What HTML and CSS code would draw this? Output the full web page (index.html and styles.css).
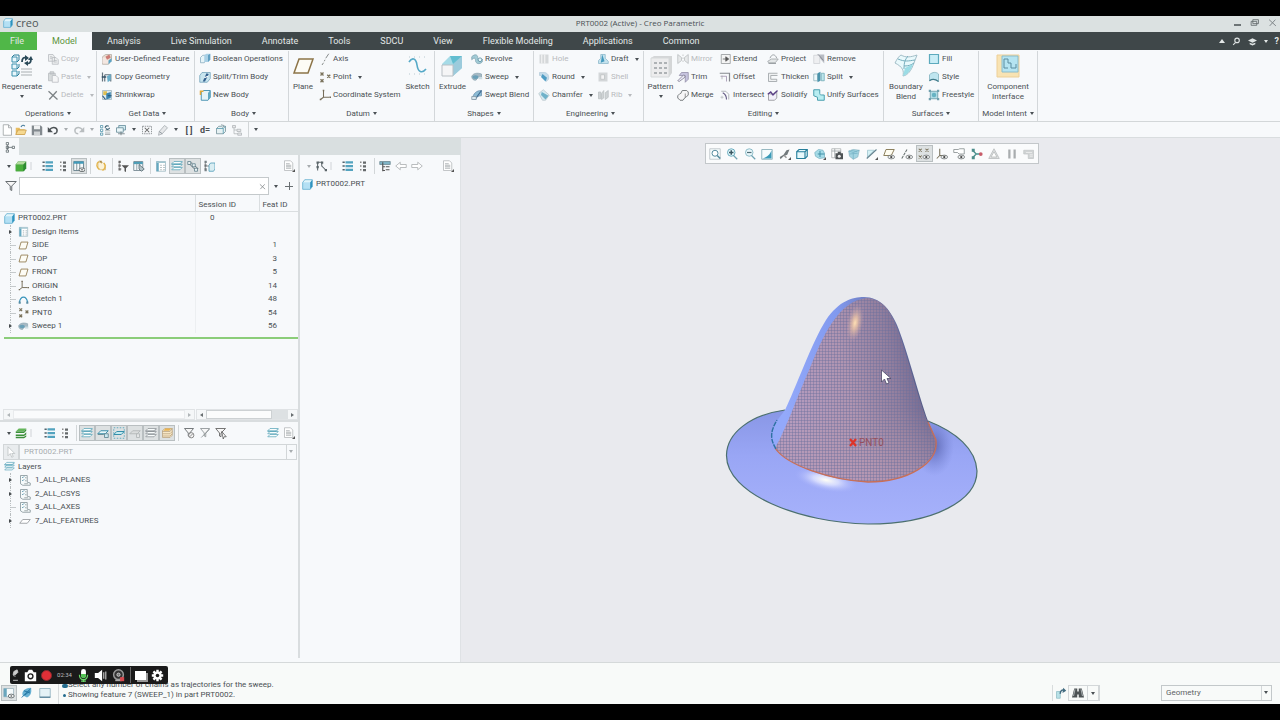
FILE: index.html
```html
<!DOCTYPE html>
<html lang="en">
<head>
<meta charset="utf-8">
<title>PRT0002 (Active) - Creo Parametric</title>
<link rel="stylesheet" href="styles.css">
</head>
<body>
<svg class="sprite" aria-hidden="true">
  <symbol id="cube" viewBox="0 0 16 16"><path d="M1 5 4 1h11v10l-3 4H1z" fill="#8ccbea"/><path d="M1 5h11v10H1z" fill="#b4e0f4"/><path d="M1 5 4 1h11l-3 4z" fill="#e2f5fb"/><path d="m12 5 3-4v10l-3 4z" fill="#2b91bd"/><path d="M1 5v10h11l3-4V1H4z" fill="none" stroke="#5aa9cb"/></symbol>
  <symbol id="gcube" viewBox="0 0 16 16"><path d="M1 6 4 2h11v9l-3 4H1z" fill="#2d8b31"/><path d="M1 6h10v9H1z" fill="#4aae3c"/><path d="m1 6 3-4h11l-4 4z" fill="#b4dc9f"/></symbol>
  <symbol id="regen" viewBox="0 0 24 24"><g fill="#e8f7fc" stroke="#3d91ad"><path d="M2 3h5v5H2zM2 10h5v5H2zM2 17h5v5H2z"/></g><path d="m2 3 2-2h5v5L7 8M7 15l2-2v-3M7 22l2-2v-3" fill="none" stroke="#2b7e9b"/><path d="M12 8c0-4 2-5 4-4M21 5c0 4-2 5-4 4" fill="none" stroke="#294958" stroke-width="1.800"/><path d="m15 1 4 3-4 3zM18 6l3-4 2 4zM18 7v5l-4-3z" fill="#294958"/><path d="M11 15h11M11 18h11M11 21h11" stroke="#a9afb2"/></symbol>
  <symbol id="copy" viewBox="0 0 16 16"><path d="M2 2h6l2 3v6H2zM7 6h5l3 3v6H7z" fill="#eceeef" stroke="#b5babd"/><path d="M4 5h3M4 7h3M9 10h4M9 12h4" stroke="#b5babd"/></symbol>
  <symbol id="paste" viewBox="0 0 16 16"><path d="M2 3h9v10H2zM4 1h5v3H4z" fill="#d7dbdc" stroke="#b5babd"/><path d="M7 6h5l3 3v6H7z" fill="#f5f6f7" stroke="#b5babd"/></symbol>
  <symbol id="cross" viewBox="0 0 16 16"><path d="m2 3 12 11M13 3 3 14" fill="none" stroke="#7d8386" stroke-width="1.7"/></symbol>
  <symbol id="udf" viewBox="0 0 16 16"><path d="M2 5 6 2h8v8l-4 5H2z" fill="#e7dcd0" stroke="#b0aaa2"/><path d="M2 6h8v8H2z" fill="#f4e7e1"/><path d="m6 5 5-3 2 4-5 3z" fill="#cc7b75"/><path d="m10 10 4-3v4l-4 4z" fill="#5aa4c6"/></symbol>
  <symbol id="copygeo" viewBox="0 0 16 16"><path d="M2 2v12M5 5v9M5 5h8v9" fill="none" stroke="#63727c" stroke-width="1.6"/><path d="m8 7 5-3v8l-4 3z" fill="#69aeca"/><path d="M1 8h6" stroke="#345267" stroke-width="2"/></symbol>
  <symbol id="shrink" viewBox="0 0 16 16"><path d="M2 2h12v12H2z" fill="#dce9ec" stroke="#9cb3be"/><path d="M3 3h5v5H3z" fill="#dfbf52"/><path d="m7 6 6-2v8l-6 2z" fill="#3b85b0"/><path d="m2 9 4 5M9 9h5" stroke="#245174" stroke-width="1.5"/></symbol>
  <symbol id="bool" viewBox="0 0 16 16"><path d="M2 6 5 3h5v6l-3 4H2z" fill="#e6f4f8" stroke="#87a9bd"/><path d="m7 3 3-2h5v8l-3 3H7z" fill="#a9d0e5"/><path d="m12 3 3-2v8l-3 3z" fill="#5f9fc1"/></symbol>
  <symbol id="splitbody" viewBox="0 0 16 16"><path d="M1 6 4 2h11v8l-4 5H1z" fill="#c8e5ef" stroke="#6fa0b8"/><path d="m5 14 5-11 3 1-5 10z" fill="#315e8d"/><path d="m7 9 5-2" stroke="#fff" stroke-width="1.5"/></symbol>
  <symbol id="newbody" viewBox="0 0 16 16"><path d="M3 5 6 2h9v9l-3 4H3z" fill="#e5f3f7" stroke="#4a94b2" stroke-width="1.3"/><path d="m12 5 3-3v9l-3 4z" fill="#5fa7c1"/><path d="M1 2h5v2H3v4H1z" fill="#e1a937"/></symbol>
  <symbol id="plane" viewBox="0 0 16 16"><path d="M4.500 3h10l-3 10h-10z" fill="#fdfcf5" stroke="#8c7448" stroke-width="1.200"/></symbol>
  <symbol id="bigplane" viewBox="0 0 24 24"><path d="M8 5h14l-5 14H3z" fill="#fdfcf5" stroke="#8c7448" stroke-width="1.500"/></symbol>
  <symbol id="axis" viewBox="0 0 16 16"><path d="M13 1 9 7M8 9l-1 2M6 13l-2 3" stroke="#7b7f7e" stroke-width="1.2"/></symbol>
  <symbol id="points" viewBox="0 0 16 16"><path d="m2 2 4 4m0-4L2 6M2 11l4 4m0-4-4 4M11 5l4 4m0-4-4 4" stroke="#79715a" stroke-width="1.800"/></symbol>
  <symbol id="csys" viewBox="0 0 16 16"><path d="M6 2v9h8M6 11l-4 3" fill="none" stroke="#766d5a" stroke-width="1.400"/><path d="M5 1h2v2H5zM1 13h2v2H1zM14 10h2v2h-2z" fill="#766d5a"/></symbol>
  <symbol id="sketch" viewBox="0 0 24 24"><path d="M3 8c3-5 7-4 8 3s5 9 9 4" fill="none" stroke="#55a9c7" stroke-width="1.600"/><path d="M3 3h18M3 20h18" stroke="#b8c9d0" stroke-dasharray="1 4"/></symbol>
  <symbol id="arc" viewBox="0 0 16 16"><path d="M2 12C4 2 12 2 14 12" fill="none" stroke="#3793bb" stroke-width="1.800"/><path d="M1 11h3v3H1zM12 11h3v3h-3z" fill="#5a8ca3"/></symbol>
  <symbol id="extrude" viewBox="0 0 24 24"><path d="M2 10 10 2h12v12l-9 8H2z" fill="#a6dbe7"/><path d="m13 10 9-8v12l-9 8z" fill="#9ccbdc"/><path d="m10 2 12 0-9 8z" fill="#62bdd0"/><path d="M2 11h11v11H2z" fill="#f5f5f6" stroke="#b9bfc4"/></symbol>
  <symbol id="revolve" viewBox="0 0 16 16"><path d="M1 5c4-4 8-3 8 1s4 6 6 2v4c-4 4-9 2-9-2s-2-4-5-1z" fill="#a2cbd6" stroke="#7fa3b0"/><circle cx="12" cy="9" r="2.500" fill="#e9f8fb" stroke="#4d8699"/></symbol>
  <symbol id="sweep" viewBox="0 0 16 16"><path d="M1 7c2-4 7-5 13-3v5c-4-1-6 0-7 3-3 1-6-1-6-5z" fill="#a6b9c4" stroke="#8aa3af"/><ellipse cx="6" cy="8" rx="4" ry="2.500" fill="#6aa0b8"/><path d="M10 8h5v3h-5z" fill="#cbdce2"/></symbol>
  <symbol id="sblend" viewBox="0 0 16 16"><path d="M2 13C3 6 7 2 14 2v7c-5 0-7 2-8 5z" fill="#8bbbd4" stroke="#6a8eab"/><path d="m6 13 8-11" stroke="#3e6a91" stroke-width="1.600"/><path d="M1 10h6v4H1z" fill="#dbe8ef" stroke="#7f94a2"/></symbol>
  <symbol id="hole" viewBox="0 0 16 16"><path d="M2 2h12v12H2z" fill="#d5d8da"/><path d="M5 2v12M9 2v12" stroke="#f4f4f5" stroke-width="1.5"/></symbol>
  <symbol id="round" viewBox="0 0 16 16"><path d="M2 2h7c4 1 6 4 5 9l-3 3-1-5c-1-3-4-3-8-3z" fill="#c5dcea" stroke="#b4cbda"/><path d="m6 4 6 5-2 5-6-6z" fill="#4f9dc4"/></symbol>
  <symbol id="chamfer" viewBox="0 0 16 16"><path d="m1 6 6-5 8 7-5 7H6z" fill="#d7eaf0" stroke="#b8c5cb"/><path d="m5 4 9 5-4 5-6-6z" fill="#70b2c9"/></symbol>
  <symbol id="draft" viewBox="0 0 16 16"><path d="M5 2h6v5l4 4v3H2v-4l3-3z" fill="#c5e2ed" stroke="#8ab5c9"/><path d="m7 2 3 9-5 2z" fill="#4499bd"/></symbol>
  <symbol id="shell" viewBox="0 0 16 16"><path d="M2 2h12v12H2z" fill="#d3d6d8"/><path d="M5 5h5v6H5z" fill="#f4f4f5" stroke="#bbc0c2"/></symbol>
  <symbol id="rib" viewBox="0 0 16 16"><path d="M2 4h3v9H2zM6 6l3-4v10l-3 2zM11 5l4-3v9l-4 3z" fill="#cfd3d5" stroke="#babfc2"/></symbol>
  <symbol id="pattern" viewBox="0 0 24 24"><path d="m2 4 3-2h18v17l-3 4H2z" fill="#d4d6d7"/><path d="M2 4h18v19H2z" fill="#ececed" stroke="#d6d9da"/><path d="M5 9h3M10 9h3M15 9h3M5 14h3M10 14h3M15 14h3M5 19h3M10 19h3M15 19h3" stroke="#aeb2b5" stroke-width="2"/></symbol>
  <symbol id="mirror" viewBox="0 0 16 16"><path d="m1 2 5 4v4l-5 4zM15 2l-5 4v4l5 4z" fill="#e7e9ea" stroke="#b5b9bb"/><path d="M8 2v12" stroke="#b5b9bb" stroke-dasharray="2"/></symbol>
  <symbol id="trim" viewBox="0 0 16 16"><path d="M6 2h9v9l-4 4V6H3z" fill="#c7c4df" stroke="#8f8aa4"/><path d="m1 13 8-8 2 3-8 6z" fill="#eceaf7" stroke="#79778b"/></symbol>
  <symbol id="merge" viewBox="0 0 16 16"><path d="M7 2h6l2 2v4l-3 3h-1l-3 4H4l-3-3V9l3-3h1z" fill="#f6f6f7" stroke="#777c7e" stroke-width="1.300"/><path d="M11 11V6" stroke="#777"/></symbol>
  <symbol id="extend" viewBox="0 0 16 16"><path d="M3 2h12v12H3V2" fill="#f4f4f4" stroke="#8d9294"/><path d="M5 8h4V5l4 3-4 3V8" fill="#555" stroke="#555"/></symbol>
  <symbol id="offset" viewBox="0 0 16 16"><path d="M1 3h13v11" fill="none" stroke="#85898e" stroke-width="1.600"/><path d="M2 7h8v7" fill="none" stroke="#9687a5"/><path d="M4 6v5" stroke="#a7a7ac"/></symbol>
  <symbol id="inter" viewBox="0 0 16 16"><path d="M3 3h6l4 4v7" fill="none" stroke="#9da2a6"/><path d="M5 5c4 2 5 4 5 9" fill="none" stroke="#655c85" stroke-width="1.5"/><path d="M2 11h4M4 9v4" stroke="#b5bbbd"/></symbol>
  <symbol id="project" viewBox="0 0 16 16"><path d="m1 11 5-3h9l-4 5H2z" fill="#e4e7e8" stroke="#999fa1"/><path d="M4 7c2-6 7-6 9 0M2 14h10" fill="none" stroke="#83898d"/></symbol>
  <symbol id="thicken" viewBox="0 0 16 16"><path d="M14 3H2v11h11v-3H5V6h9" fill="#eff1f2" stroke="#949a9d"/></symbol>
  <symbol id="solid" viewBox="0 0 16 16"><path d="m2 6 5 1 6-4v9l-3 3H2z" fill="#f2f0fa" stroke="#88898e"/><path d="m1 7 4-3 3 4 6-6" fill="none" stroke="#5b3f88" stroke-width="1.700"/></symbol>
  <symbol id="remove" viewBox="0 0 16 16"><path d="M5 2h10v12z" fill="#b8bcc3"/><path d="M1 3h8v11H1z" fill="#eeeff1" stroke="#cdd0d4"/><path d="m7 2 7 8" stroke="#767781"/></symbol>
  <symbol id="split" viewBox="0 0 16 16"><path d="M1 4h5v9H1z" fill="#eef9fb" stroke="#8cb0ba"/><path d="m6 3 4-2v12l-4 2z" fill="#4b94ac"/><path d="M11 3h4v10h-4z" fill="#bce5eb" stroke="#6ea8b3"/></symbol>
  <symbol id="unify" viewBox="0 0 16 16"><path d="M1 1h8v5c0 2 1 2 6 2v7H6v-4L1 9z" fill="#b8edf1" stroke="#469dad" stroke-width="1.3"/></symbol>
  <symbol id="boundary" viewBox="0 0 24 24"><path d="M1 9C3 5 5 2 7 1c5 3 10 2 16 0l-3 8c-3 8-6 12-11 13 1-5 0-9-8-13z" fill="#e9f9fc" stroke="#a3bec8"/><path d="M4 5c7 3 10 2 17 1M10 12c5 0 7-1 10-3M14 2c-3 4-4 6-4 13" fill="none" stroke="#74adbc"/><path d="m11 14 8-4c-2 6-5 10-10 12z" fill="#9bdce5"/></symbol>
  <symbol id="fill" viewBox="0 0 16 16"><path d="M2 2h12v12H2z" fill="#c9edf6" stroke="#5caabd" stroke-width="1.600"/></symbol>
  <symbol id="style" viewBox="0 0 16 16"><path d="M2 13V5c4-4 9-4 12-1v10c-4-3-8-4-12-1z" fill="#bfe5ef" stroke="#7badba"/><path d="M2 13c4-3 8-2 12 1" fill="none" stroke="#437c8b" stroke-width="1.5"/></symbol>
  <symbol id="free" viewBox="0 0 16 16"><path d="M3 3h10v10H3z" fill="#b0dce5" stroke="#6293a0"/><path d="M1 1h3v3H1zM12 1h3v3h-3zM1 12h3v3H1zM12 12h3v3h-3z" fill="#6fa0ae"/><circle cx="8" cy="8" r="3" fill="#67b3c3"/></symbol>
  <symbol id="compif" viewBox="0 0 24 24"><path d="M1 1h22v22H1z" fill="#f8e3b3" stroke="#edcf97"/><path d="M6 2h16v16H6z" fill="#b5e4f1" stroke="#8bbccb"/><path d="M8 5h4v4h3v5h5v-4M8 5v9h4" fill="none" stroke="#5a8c9f"/></symbol>
  <symbol id="page" viewBox="0 0 16 16"><path d="M3 1h7l4 4v10H3z" fill="#fff" stroke="#969b9e"/><path d="M10 1v4h4" fill="none" stroke="#969b9e"/></symbol>
  <symbol id="report" viewBox="0 0 16 16"><path d="M2 1h8l3 3v10H2z" fill="#fff" stroke="#b0b4b6"/><path d="M4 5h5M4 7h7M4 9h7M4 11h7" stroke="#9ba1a4"/><path d="M12 16h4v-4z" fill="#555"/></symbol>
  <symbol id="open" viewBox="0 0 16 16"><path d="M1 5h5l1 2h6v7H1z" fill="#e8bd62"/><path d="m1 14 3-6h11l-2 6z" fill="#f6d991" stroke="#c89b4a"/><path d="M8 4c1-3 4-3 5-1" fill="none" stroke="#467b9b" stroke-width="1.500"/></symbol>
  <symbol id="save" viewBox="0 0 16 16"><path d="M1 2h12l2 2v11H1z" fill="#838a8f"/><path d="M4 2h8v5H4z" fill="#eff1f2"/><path d="M4 10h8v5H4z" fill="#d0d4d6"/></symbol>
  <symbol id="undo" viewBox="0 0 16 16"><path d="M3 8c5-6 12-3 10 3-1 2-3 2-4 2" fill="none" stroke="currentColor" stroke-width="2"/><path d="M1 4v7h7z" fill="currentColor"/></symbol>
  <symbol id="regs" viewBox="0 0 16 16"><path d="M2 2h3v3H2zM2 7h3v3H2zM2 12h3v3H2z" fill="#fff" stroke="#4a8fa7"/><path d="M8 5c1-3 3-3 5-2M14 5c0 2-3 3-5 1" fill="none" stroke="#3b6173" stroke-width="1.500"/><path d="M8 9h7M8 12h7M8 14h7" stroke="#92999c"/></symbol>
  <symbol id="windows" viewBox="0 0 16 16"><path d="M5 2h9v6H5z" fill="#d3ebf1" stroke="#598494"/><path d="M2 5h9v6H2z" fill="#eaf7f9" stroke="#5b8390"/><path d="M4 13h9M8 10v5" stroke="#67747a"/></symbol>
  <symbol id="closewin" viewBox="0 0 16 16"><path d="M2 3h12v10H2z" fill="none" stroke="#777d80" stroke-dasharray="2 1"/><path d="m5 5 6 6m0-6-6 6" stroke="#666" stroke-width="1.400"/></symbol>
  <symbol id="brush" viewBox="0 0 16 16"><path d="m10 2 4 3-7 8-5 2 1-5z" fill="#e6e8ea" stroke="#a0a7ab"/><path d="m3 10 4 3" stroke="#77818a"/></symbol>
  <symbol id="views" viewBox="0 0 16 16"><path d="M5 3h9v7l-3 3H2V6z" fill="#e6f1f3" stroke="#6e8b94"/><path d="M2 6h9v7M11 6l3-3" fill="none" stroke="#4c94aa"/><path d="m8 1 4 1-2 3" fill="#d3e7eb" stroke="#829298"/></symbol>
  <symbol id="treegray" viewBox="0 0 16 16"><path d="M2 2h4v3H2zM8 7h5v3H8zM9 12h5v3H9z" fill="#e7e8ea" stroke="#afb4b7"/><path d="M4 5v8h5M4 8h4" fill="none" stroke="#afb4b7"/></symbol>
  <symbol id="tree" viewBox="0 0 16 16"><path d="M3 2h3v3H3zM3 7h3v3H3zM3 12h3v3H3zM11 7h3v3h-3z" fill="#f4f7f7" stroke="#5b6569"/><path d="M4.500 5v7M6 8.500h5" stroke="#5b6569"/></symbol>
  <symbol id="dots" viewBox="0 0 16 16"><path d="M8 1v15" stroke="#a9afb2" stroke-width="2" stroke-dasharray="2 2"/></symbol>
  <symbol id="expand" viewBox="0 0 16 16"><path d="M6 3h10M6 8h10M6 13h10" stroke="#53a3bf" stroke-width="3"/><path d="M2 3h3M2 8h3M2 13h3" fill="none" stroke="#51636d" stroke-width="2"/></symbol>
  <symbol id="collapse" viewBox="0 0 16 16"><path d="M8 2h4v3H8zM8 7h4v3H8zM8 12h4v3H8z" fill="#65696b"/><path d="M4 3h2M4 8h2M4 13h2" stroke="#888" stroke-width="2"/></symbol>
  <symbol id="columns" viewBox="0 0 16 16"><path d="M1 2h13v12H1z" fill="#f6fafb" stroke="#526f7c"/><path d="M1 3.500h13" stroke="#409cbc" stroke-width="3"/><path d="M5 4v10M9 4v10" stroke="#5d7480"/><ellipse cx="12" cy="13" rx="4" ry="2.500" fill="#eef1f1" stroke="#4b5254"/><circle cx="12" cy="13" r="1" fill="#444"/></symbol>
  <symbol id="navicon" viewBox="0 0 16 16"><path d="M1 2h13v11H1z" fill="#f6fafb" stroke="#9bb2bb"/><path d="M1 2h4v11H1z" fill="#6aa6bd"/><ellipse cx="11" cy="12" rx="4" ry="2.500" fill="#eef1f1" stroke="#4b5254"/><circle cx="11" cy="12" r="1" fill="#444"/></symbol>
  <symbol id="pref" viewBox="0 0 16 16"><path d="M4 3h6l4 4v6H7l-3-3z" fill="#fbf2d8" stroke="#d4b778"/><path d="M5 2c-4 3-3 8 1 11M12 4c3 4 1 8-2 10" fill="none" stroke="#e4b447" stroke-width="1.800"/><path d="M5 1h4v4z" fill="#a88742"/></symbol>
  <symbol id="tfilter" viewBox="0 0 16 16"><path d="M2 1h3v3H2zM2 6h3v3H2zM2 11h3v3H2z" fill="#666"/><path d="M3 3v9h3" fill="none" stroke="#777"/><path d="M6 7h10l-4 4v5l-2-1v-4z" fill="#555"/></symbol>
  <symbol id="detail" viewBox="0 0 16 16"><path d="M2 2h3v3H2zM2 8h3v3H2zM8 2h3v3H8zM13 12h3v3h-3z" fill="#5b6569"/><path d="M3.500 4v10M4 3h5M9 4v4l5 5" fill="none" stroke="#5b6569" stroke-width="1.400"/></symbol>
  <symbol id="colfind" viewBox="0 0 16 16"><path d="M1 2h12v12H1z" fill="#f4f8fa" stroke="#617681"/><path d="M1 4h12" stroke="#4b9fb9" stroke-width="3"/><path d="M5 4v10M9 4v10" stroke="#7c9098"/><path d="m8 6 7 6-4 3-3-3z" fill="#b5c5ca" stroke="#54666e"/></symbol>
  <symbol id="design" viewBox="0 0 16 16"><path d="M2 2h12v13H2z" fill="#fff" stroke="#9ab6bf"/><path d="M2 2h3v13H2z" fill="#64a8c0"/><path d="M2 3h12" stroke="#a2c6d0" stroke-width="2"/><path d="M7 7h2M11 7h2M7 10h2M11 10h2M7 13h2M11 13h2" stroke="#88989d"/></symbol>
  <symbol id="layers" viewBox="0 0 16 16"><path d="m1 5 3-3h11l-3 3zM1 9l3-3h11l-3 3zM1 13l3-3h11l-3 3z" fill="#f9fdfd" stroke="currentColor"/><path d="M1 5v1h11l3-3" fill="none" stroke="currentColor"/></symbol>
  <symbol id="glayers" viewBox="0 0 16 16"><path d="m1 6 4-4h10l-3 4z" fill="#64b65a"/><path d="M1 6h11l3-4v3l-3 3H1zM1 10h11l3-3v3l-3 2H1zM1 13h11l3-2v2l-3 2H1z" fill="#3c8f3a"/></symbol>
  <symbol id="chain" viewBox="0 0 16 16"><path d="M1 2h4v4H1zM7 5h4v4H7zM10 11h4v4h-4z" fill="#eaf2f4" stroke="#587986"/><path d="M5 4h2M11 8l4 4M4 6l6 6" stroke="#5e6f78" stroke-width="1.200"/></symbol>
  <symbol id="treecube" viewBox="0 0 16 16"><path d="M2 1h3v3H2zM2 6h3v3H2zM2 11h3v4H2z" fill="#768085"/><path d="M3 4v9M5 8h3" stroke="#666"/><path d="m8 7 2-3h6v8l-2 3H8z" fill="#d9edf2" stroke="#4595b3"/></symbol>
  <symbol id="funnel" viewBox="0 0 16 16"><path d="M1 2h14L9 8v6l-2-1V8z" fill="#f7f7f7" stroke="#62686b" stroke-width="1.300"/></symbol>
  <symbol id="funnelx" viewBox="0 0 16 16"><path d="M2 2h12L9 8v5l-2-1V8zM3 14 14 3" fill="#f7f7f7" stroke="#7f8588"/></symbol>
  <symbol id="funnelo" viewBox="0 0 16 16"><path d="M2 2h12L9 8v5l-2-1V8z" fill="#f7f7f7" stroke="#666c6f" stroke-width="1.200"/><circle cx="11" cy="11" r="3.500" fill="#f7f7f7" stroke="#666"/><path d="m9 13 4-4" stroke="#666"/></symbol>
  <symbol id="funnelp" viewBox="0 0 16 16"><path d="M1 2h13L8 8v5L6 12V8z" fill="#f7f7f7" stroke="#666" stroke-width="1.200"/><path d="m9 6 6 7-3 0-1 3z" fill="#fff" stroke="#555"/></symbol>
  <symbol id="left" viewBox="0 0 16 16"><path d="m1 8 6-5v3h8v4H7v3z" fill="#fff" stroke="#a4a8aa"/></symbol>
  <symbol id="right" viewBox="0 0 16 16"><path d="M15 8 9 3v3H1v4h8v3z" fill="#fff" stroke="#a4a8aa"/></symbol>
  <symbol id="treelist" viewBox="0 0 16 16"><path d="M1 2h14v4H1z" fill="#7fb4c6" stroke="#69858f"/><path d="M5 3v12M5 9h3M5 14h3M9 9h5M9 13h5" stroke="#555" stroke-width="1.500"/></symbol>
  <symbol id="layer1" viewBox="0 0 16 16"><path d="m1 9 4-4h10l-4 4z" fill="#e9f7fa" stroke="#398eaa" stroke-width="1.300"/><path d="M10 9h5v5h-5zM1 10h8" fill="#ccebf2" stroke="#537985"/></symbol>
  <symbol id="layer2" viewBox="0 0 16 16"><path d="M1 1h14v14H1z" fill="none" stroke="#399ab7" stroke-dasharray="2"/><path d="m1 10 4-4h10l-4 4z" fill="#c5ebf1" stroke="#328da9" stroke-width="1.300"/></symbol>
  <symbol id="layer3" viewBox="0 0 16 16"><path d="m1 9 4-4h10l-4 4z" fill="#dadddd" stroke="#abb0b1"/><path d="M10 9h4v5h-4z" fill="#e3e5e5" stroke="#abb0b1"/></symbol>
  <symbol id="layer4" viewBox="0 0 16 16"><path d="M2 5 5 2h10l-3 4H2zM2 5v9h10l3-3V2M2 9h10l3-3M2 12h10l3-3" fill="#f8e8c7" stroke="#b8a27d"/><path d="m3 5 3-3h8l-3 3z" fill="#ebb451"/></symbol>
  <symbol id="layeritem" viewBox="0 0 16 16"><path d="M2 2h9v9l4 1v3H5l-3-2z" fill="#f6fafb" stroke="#7c8c92"/><path d="m4 4 1 1 2-2M4 8l1 1 2-2" fill="none" stroke="#397f9a"/><path d="M8 5h2M8 9h2M7 13h5" stroke="#899496"/></symbol>
  <symbol id="sheet" viewBox="0 0 16 16"><path d="m1 11 4-5h10l-4 5z" fill="#fff" stroke="#8a8e90"/></symbol>
  <symbol id="pointer" viewBox="0 0 16 16"><path d="M4 1v12l3-3 2 5 2-1-2-4h4z" fill="#fff" stroke="currentColor"/></symbol>
  <symbol id="zfit" viewBox="0 0 16 16"><path d="M1 1h14v14H1z" fill="#f5fbfc" stroke="#b5bec1"/><circle cx="8" cy="7" r="4" fill="#fff" stroke="#52899b" stroke-width="1.300"/><path d="m11 10 4 4" stroke="#52899b" stroke-width="2"/></symbol>
  <symbol id="zin" viewBox="0 0 16 16"><circle cx="7" cy="6" r="5" fill="#e0f6fa" stroke="#4695ac"/><path d="m10 10 5 5" stroke="#6fa3b3" stroke-width="1.600"/><path d="M4 6h6M7 3v6" stroke="#3a5661" stroke-width="2"/></symbol>
  <symbol id="zout" viewBox="0 0 16 16"><circle cx="7" cy="6" r="5" fill="#e9f7fa" stroke="#6fa9ba"/><path d="m10 10 5 5" stroke="#6fa3b3" stroke-width="1.600"/><path d="M4 6h6" stroke="#4f6c76" stroke-width="1.600"/></symbol>
  <symbol id="repaint" viewBox="0 0 16 16"><path d="M1 2h14v13H1z" fill="#f7fcfd" stroke="#78a3af"/><path d="M2 14C8 12 12 9 14 3v11z" fill="#3a9ab8"/></symbol>
  <symbol id="render" viewBox="0 0 16 16"><path d="m1 12 5-3 4-6 4-1-3 7-5 2-4 4z" fill="#737a7d"/><path d="m7 10 3 3" stroke="#999" stroke-width="2"/><path d="M12 16h4v-4z" fill="#555"/></symbol>
  <symbol id="box" viewBox="0 0 16 16"><path d="M1 5 4 2h11v9l-3 3H1z" fill="#e7f9fc" stroke="#287f9b" stroke-width="1.500"/><path d="M1 5h11v9M12 5l3-3" fill="none" stroke="#247e9c" stroke-width="1.500"/></symbol>
  <symbol id="saved" viewBox="0 0 16 16"><path d="m1 6 5-4 6 1 2 4v6l-7 1-5-3z" fill="#a5dbe7" stroke="#7ab1c1"/><path d="M5 8h9M8 4v8" stroke="#4190a6" stroke-width="1.300"/><path d="M12 16h4v-4z" fill="#555"/></symbol>
  <symbol id="camera" viewBox="0 0 16 16"><path d="M1 1h12v12H1z" fill="#fff" stroke="#a5aaac"/><path d="M1 4h12M5 1v12" stroke="#92999c"/><path d="M6 7h10v8H6zM9 5h4v2H9z" fill="#4e5355"/><circle cx="11" cy="11" r="2" fill="#eee"/></symbol>
  <symbol id="persp" viewBox="0 0 16 16"><path d="m1 4 6-2 8 1-2 9-6 3-5-4z" fill="#a4d5e2" stroke="#8db7c4"/><path d="m1 4 6 2 8-3M7 6v9M4 3l8 2M2 8l11-1" stroke="#76b3c5" fill="none"/></symbol>
  <symbol id="section" viewBox="0 0 16 16"><path d="M2 3h9L2 12z" fill="#d5f1f5" stroke="#9bc3cd"/><path d="m1 14 13-12" stroke="#63828f" stroke-width="1.500"/><path d="M12 16h4v-4z" fill="#555"/></symbol>
  <symbol id="eye" viewBox="0 0 16 16"><ellipse cx="11" cy="12" rx="4.500" ry="2.500" fill="#eef0f0" stroke="#6a6f71"/><circle cx="11" cy="12" r="1.500" fill="#444"/></symbol>
  <symbol id="planeeye" viewBox="0 0 16 16"><path d="M4 2h11l-4 8H1z" fill="#fffdf1" stroke="#8a7d59" stroke-width="1.300"/><use href="#eye"/></symbol>
  <symbol id="axiseye" viewBox="0 0 16 16"><path d="m1 14 7-12" stroke="#66706f" stroke-width="1.400" stroke-dasharray="4 1"/><use href="#eye"/></symbol>
  <symbol id="pointeye" viewBox="0 0 16 16"><path d="m1 1 4 4m0-4L1 5M10 1l4 4m0-4-4 4M1 10l4 4m0-4-4 4" stroke="#777059" stroke-width="1.400"/><use href="#eye"/></symbol>
  <symbol id="csyseye" viewBox="0 0 16 16"><path d="M5 1v9h8M5 10l-4 4" fill="none" stroke="#777059" stroke-width="1.400"/><use href="#eye"/></symbol>
  <symbol id="anno" viewBox="0 0 16 16"><path d="M1 2h6l2-1h6v7H8L6 6H1z" fill="#fff" stroke="#7d8587"/><use href="#eye"/></symbol>
  <symbol id="drag" viewBox="0 0 16 16"><path d="m2 3 5 5-5 5M7 8h6" fill="none" stroke="#4a918e" stroke-width="1.800"/><path d="M1 1h4v4H1zM1 11h4v4H1z" fill="#4d8d8b"/><circle cx="13" cy="8" r="2.500" fill="#c85b69"/></symbol>
  <symbol id="tri" viewBox="0 0 16 16"><path d="m8 1 7 13H1z" fill="#e0e2e3" stroke="#b4b8ba"/><path d="m8 5 4 7H4z" fill="#fff" stroke="#b2b5b6"/></symbol>
  <symbol id="pause" viewBox="0 0 16 16"><path d="M3 2h3v12H3zM10 2h3v12h-3z" fill="#a9adaf"/></symbol>
  <symbol id="panel" viewBox="0 0 16 16"><path d="M1 3h13v11H7V8H1z" fill="#d0d3d4" stroke="#c2c5c7"/><path d="M4 6h8M9 9h4M9 11h4" stroke="#f2f2f2"/></symbol>
  <symbol id="web" viewBox="0 0 16 16"><path d="M2 11C1 5 5 2 13 1c2 5 0 11-5 13z" fill="#67b1d3"/><path d="m1 14 12-12M4 5l8 3M5 11l7-6" stroke="#2375a2" stroke-width="1.300"/></symbol>
  <symbol id="screen" viewBox="0 0 16 16"><path d="M1 2h14v12H1z" fill="#e5f2f6" stroke="#86a9b8"/><path d="M1 13.500h14" stroke="#4c7890" stroke-width="1.500"/></symbol>
  <symbol id="regenlight" viewBox="0 0 16 16"><path d="M2 6h5v9H2z" fill="#b8e1e7" stroke="#8dbcc6"/><path d="M7 9c0-5 3-6 6-4" fill="none" stroke="#426b80" stroke-width="2"/><path d="m11 1 4 4-5 3z" fill="#426b80"/></symbol>
  <symbol id="bino" viewBox="0 0 16 16"><path d="M3 2h4v4h2V2h4l3 12H9v-4H7v4H0z" fill="#4c5254"/><path d="M4 3 2 12M12 3l2 9" stroke="#a6acae" stroke-width="1.500"/></symbol>
  <symbol id="lens" viewBox="0 0 16 16"><circle cx="9" cy="6" r="4" fill="none" stroke="#dfe4e4" stroke-width="2"/><path d="m6 10-4 4" stroke="#dfe4e4" stroke-width="2"/></symbol>
  <symbol id="learn" viewBox="0 0 16 16"><path d="m0 6 8-4 8 4-8 4zM3 10l5 2 5-2v3l-5 2-5-2z" fill="#dfe4e4"/></symbol>
  <symbol id="shot" viewBox="0 0 16 16"><path d="M1 4h3l2-3h4l2 3h3v11H1z" fill="#fff"/><circle cx="8" cy="9" r="3" fill="none" stroke="#222" stroke-width="1.700"/></symbol>
  <symbol id="mic" viewBox="0 0 16 16"><rect x="5" y="0" width="6" height="11" rx="3" fill="#fff"/><path d="M5 6h6v3c0 3-6 3-6 0z" fill="#53c354"/><path d="M3 7c0 8 10 8 10 0M8 13v3M5 15h6" fill="none" stroke="#68d569" stroke-width="1.500"/></symbol>
  <symbol id="sound" viewBox="0 0 16 16"><path d="M1 5h4l5-4v14l-5-4H1z" fill="#fff"/><path d="M12 4v8M14.500 3v10" stroke="#bbb" stroke-width="1.500"/></symbol>
  <symbol id="webcam" viewBox="0 0 16 16"><circle cx="8" cy="7" r="6" fill="#333" stroke="#999" stroke-width="1.800"/><circle cx="8" cy="7" r="2" fill="#777" stroke="#ddd"/><path d="M4 14h8" stroke="#aaa" stroke-width="2"/><path d="M10 10h5v5h-5z" fill="#d84a4f"/></symbol>
  <symbol id="gear" viewBox="0 0 16 16"><path d="M8 1v14M1 8h14M3 3l10 10M13 3 3 13" stroke="#fff" stroke-width="3"/><circle cx="8" cy="8" r="5" fill="#fff"/><circle cx="8" cy="8" r="2.200" fill="#1c1c1c"/></symbol>
  <symbol id="pin" viewBox="0 0 8 16"><path d="m1 7 1-4 4-2 1 3-3 3zM1 8l3 1" fill="#ccc" stroke="#ccc"/><path d="M1 14h6" stroke="#999" stroke-width="1.500"/></symbol>
  <symbol id="restore" viewBox="0 0 16 16"><path d="M5 3h10v7H5zM2 6h10v7H2z" fill="#dbe1e1" stroke="#636a6c" stroke-width="1.500"/></symbol>
</svg>

<header class="titlebar">
  <div class="brand"><svg class="i"><use href="#cube"/></svg><span>creo</span></div>
  <h1>PRT0002 (Active) - Creo Parametric</h1>
  <div class="winbtns">
    <button aria-label="Minimize"><span class="min"></span></button>
    <button aria-label="Restore"><svg class="i s"><use href="#restore"/></svg></button>
    <button aria-label="Close"><svg class="i s"><use href="#cross"/></svg></button>
  </div>
</header>

<nav class="tabs">
  <button class="file">File</button><button class="active">Model</button><button>Analysis</button><button>Live Simulation</button><button>Annotate</button><button>Tools</button><button>SDCU</button><button>View</button><button>Flexible Modeling</button><button>Applications</button><button>Common</button>
  <div class="tabtools">
    <button aria-label="Minimize ribbon"><span class="up"></span></button>
    <button aria-label="Search"><svg class="i s"><use href="#lens"/></svg></button>
    <button aria-label="Learning"><svg class="i s"><use href="#learn"/></svg></button>
    <button aria-label="More"><span class="car"></span></button>
    <button aria-label="Help">?</button>
  </div>
</nav>

<section class="ribbon">
  <div class="group g-ops">
    <div class="cmds">
      <button class="big"><svg class="ib"><use href="#regen"/></svg>Regenerate<span class="car"></span></button>
      <div class="col">
        <button class="cmd off"><svg class="i"><use href="#copy"/></svg>Copy</button>
        <button class="cmd off"><svg class="i"><use href="#paste"/></svg>Paste<span class="car"></span></button>
        <button class="cmd off"><svg class="i"><use href="#cross"/></svg>Delete<span class="car"></span></button>
      </div>
    </div>
    <button class="glabel">Operations<span class="car"></span></button>
  </div>
  <div class="group g-data">
    <div class="cmds">
      <div class="col">
        <button class="cmd"><svg class="i"><use href="#udf"/></svg>User-Defined Feature</button>
        <button class="cmd"><svg class="i"><use href="#copygeo"/></svg>Copy Geometry</button>
        <button class="cmd"><svg class="i"><use href="#shrink"/></svg>Shrinkwrap</button>
      </div>
    </div>
    <button class="glabel">Get Data<span class="car"></span></button>
  </div>
  <div class="group g-body">
    <div class="cmds">
      <div class="col">
        <button class="cmd"><svg class="i"><use href="#bool"/></svg>Boolean Operations</button>
        <button class="cmd"><svg class="i"><use href="#splitbody"/></svg>Split/Trim Body</button>
        <button class="cmd"><svg class="i"><use href="#newbody"/></svg>New Body</button>
      </div>
    </div>
    <button class="glabel">Body<span class="car"></span></button>
  </div>
  <div class="group g-datum">
    <div class="cmds">
      <button class="big"><svg class="ib"><use href="#bigplane"/></svg>Plane</button>
      <div class="col">
        <button class="cmd"><svg class="i"><use href="#axis"/></svg>Axis</button>
        <button class="cmd"><svg class="i"><use href="#points"/></svg>Point<span class="car"></span></button>
        <button class="cmd"><svg class="i"><use href="#csys"/></svg>Coordinate System</button>
      </div>
      <button class="big"><svg class="ib"><use href="#sketch"/></svg>Sketch</button>
    </div>
    <button class="glabel">Datum<span class="car"></span></button>
  </div>
  <div class="group g-shapes">
    <div class="cmds">
      <button class="big"><svg class="ib"><use href="#extrude"/></svg>Extrude</button>
      <div class="col">
        <button class="cmd"><svg class="i"><use href="#revolve"/></svg>Revolve</button>
        <button class="cmd"><svg class="i"><use href="#sweep"/></svg>Sweep<span class="car"></span></button>
        <button class="cmd"><svg class="i"><use href="#sblend"/></svg>Swept Blend</button>
      </div>
    </div>
    <button class="glabel">Shapes<span class="car"></span></button>
  </div>
  <div class="group g-eng">
    <div class="cmds">
      <div class="col">
        <button class="cmd off"><svg class="i"><use href="#hole"/></svg>Hole</button>
        <button class="cmd"><svg class="i"><use href="#round"/></svg>Round<span class="car"></span></button>
        <button class="cmd"><svg class="i"><use href="#chamfer"/></svg>Chamfer<span class="car"></span></button>
      </div>
      <div class="col">
        <button class="cmd"><svg class="i"><use href="#draft"/></svg>Draft<span class="car"></span></button>
        <button class="cmd off"><svg class="i"><use href="#shell"/></svg>Shell</button>
        <button class="cmd off"><svg class="i"><use href="#rib"/></svg>Rib<span class="car"></span></button>
      </div>
    </div>
    <button class="glabel">Engineering<span class="car"></span></button>
  </div>
  <div class="group g-edit">
    <div class="cmds">
      <button class="big"><svg class="ib"><use href="#pattern"/></svg>Pattern<span class="car"></span></button>
      <div class="col">
        <button class="cmd off"><svg class="i"><use href="#mirror"/></svg>Mirror</button>
        <button class="cmd"><svg class="i"><use href="#trim"/></svg>Trim</button>
        <button class="cmd"><svg class="i"><use href="#merge"/></svg>Merge</button>
      </div>
      <div class="col">
        <button class="cmd"><svg class="i"><use href="#extend"/></svg>Extend</button>
        <button class="cmd"><svg class="i"><use href="#offset"/></svg>Offset</button>
        <button class="cmd"><svg class="i"><use href="#inter"/></svg>Intersect</button>
      </div>
      <div class="col">
        <button class="cmd"><svg class="i"><use href="#project"/></svg>Project</button>
        <button class="cmd"><svg class="i"><use href="#thicken"/></svg>Thicken</button>
        <button class="cmd"><svg class="i"><use href="#solid"/></svg>Solidify</button>
      </div>
      <div class="col">
        <button class="cmd"><svg class="i"><use href="#remove"/></svg>Remove</button>
        <button class="cmd"><svg class="i"><use href="#split"/></svg>Split<span class="car"></span></button>
        <button class="cmd"><svg class="i"><use href="#unify"/></svg>Unify Surfaces</button>
      </div>
    </div>
    <button class="glabel">Editing<span class="car"></span></button>
  </div>
  <div class="group g-surf">
    <div class="cmds">
      <button class="big"><svg class="ib"><use href="#boundary"/></svg>Boundary<br>Blend</button>
      <div class="col">
        <button class="cmd"><svg class="i"><use href="#fill"/></svg>Fill</button>
        <button class="cmd"><svg class="i"><use href="#style"/></svg>Style</button>
        <button class="cmd"><svg class="i"><use href="#free"/></svg>Freestyle</button>
      </div>
    </div>
    <button class="glabel">Surfaces<span class="car"></span></button>
  </div>
  <div class="group g-intent">
    <div class="cmds">
      <button class="big"><svg class="ib"><use href="#compif"/></svg>Component<br>Interface</button>
    </div>
    <button class="glabel">Model Intent<span class="car"></span></button>
  </div>
</section>

<div class="quick bar">
  <button class="first" aria-label="New"><svg class="i"><use href="#page"/></svg></button>
  <button aria-label="Open"><svg class="i"><use href="#open"/></svg></button>
  <button aria-label="Save"><svg class="i"><use href="#save"/></svg></button>
  <button aria-label="Undo"><svg class="i dark"><use href="#undo"/></svg></button>
  <button class="drop" aria-label="Undo list"><span class="car pale"></span></button>
  <button aria-label="Redo"><svg class="i pale flip"><use href="#undo"/></svg></button>
  <button class="drop" aria-label="Redo list"><span class="car pale"></span></button>
  <button aria-label="Regenerate"><svg class="i"><use href="#regs"/></svg></button>
  <button aria-label="Windows"><svg class="i"><use href="#windows"/></svg></button>
  <button class="drop" aria-label="Window list"><span class="car"></span></button>
  <button aria-label="Close window"><svg class="i"><use href="#closewin"/></svg></button>
  <button aria-label="Appearance"><svg class="i"><use href="#brush"/></svg></button>
  <button class="drop" aria-label="Appearance list"><span class="car"></span></button>
  <button class="glyph">[ ]</button>
  <button class="glyph">d=</button>
  <button aria-label="Views"><svg class="i"><use href="#views"/></svg></button>
  <button aria-label="Structure"><svg class="i"><use href="#treegray"/></svg></button>
  <span class="sep"></span>
  <button class="drop" aria-label="Customize"><span class="car"></span></button>
</div>

<main>
  <aside class="side">
    <div class="strip"><button class="on" aria-label="Model tree"><svg class="i"><use href="#tree"/></svg></button></div>
    <div class="panels">
      <div class="pleft">
        <div class="bar">
          <button class="drop" aria-label="Tree menu"><span class="car"></span></button>
          <svg class="i"><use href="#gcube"/></svg><svg class="grip"><use href="#dots"/></svg>
          <button aria-label="Expand all"><svg class="i"><use href="#expand"/></svg></button>
          <button aria-label="Collapse all"><svg class="i"><use href="#collapse"/></svg></button>
          <button class="on" aria-label="Columns"><svg class="i"><use href="#columns"/></svg></button>
          <span class="sep"></span>
          <button aria-label="Preferences"><svg class="i"><use href="#pref"/></svg></button>
          <span class="sep"></span>
          <button aria-label="Tree filters"><svg class="i"><use href="#tfilter"/></svg></button>
          <button aria-label="Find columns"><svg class="i"><use href="#colfind"/></svg></button>
          <span class="sep"></span>
          <button aria-label="Design items"><svg class="i"><use href="#design"/></svg></button>
          <button class="on" aria-label="Layers"><svg class="i teal"><use href="#layers"/></svg></button>
          <button class="on" aria-label="References"><svg class="i"><use href="#chain"/></svg></button>
          <button aria-label="Bodies"><svg class="i"><use href="#treecube"/></svg></button>
          <button class="end" aria-label="Save tree"><svg class="i"><use href="#report"/></svg></button>
        </div>
        <div class="find">
          <svg class="i"><use href="#funnel"/></svg>
          <div class="box"><input type="text" aria-label="Filter tree"><button aria-label="Clear"><svg class="ix"><use href="#cross"/></svg></button></div>
          <button class="drop" aria-label="Filter options"><span class="car"></span></button>
          <button class="plus" aria-label="Add filter"></button>
        </div>
        <table class="treetable">
          <thead><tr><th></th><th>Session ID</th><th>Feat ID</th></tr></thead>
          <tbody>
            <tr><td><div class="n root"><svg class="i"><use href="#cube"/></svg>PRT0002.PRT</div></td><td>0</td><td></td></tr>
            <tr><td><div class="n kid"><span class="tw"></span><svg class="i"><use href="#design"/></svg>Design Items</div></td><td></td><td></td></tr>
            <tr><td><div class="n kid"><span class="el"></span><svg class="i"><use href="#plane"/></svg>SIDE</div></td><td></td><td>1</td></tr>
            <tr><td><div class="n kid"><span class="el"></span><svg class="i"><use href="#plane"/></svg>TOP</div></td><td></td><td>3</td></tr>
            <tr><td><div class="n kid"><span class="el"></span><svg class="i"><use href="#plane"/></svg>FRONT</div></td><td></td><td>5</td></tr>
            <tr><td><div class="n kid"><span class="el"></span><svg class="i"><use href="#csys"/></svg>ORIGIN</div></td><td></td><td>14</td></tr>
            <tr><td><div class="n kid"><span class="el"></span><svg class="i"><use href="#arc"/></svg>Sketch 1</div></td><td></td><td>48</td></tr>
            <tr><td><div class="n kid"><span class="el"></span><svg class="i"><use href="#points"/></svg>PNT0</div></td><td></td><td>54</td></tr>
            <tr><td><div class="n kid"><span class="tw"></span><svg class="i"><use href="#sweep"/></svg>Sweep 1</div></td><td></td><td>56</td></tr>
          </tbody>
        </table>
        <div class="insert"></div>
        <div class="scrolls">
          <div class="scroll dim"><span class="tl"></span><span class="track"></span><span class="tr"></span></div>
          <div class="scroll"><span class="tl"></span><span class="track"><span class="thumb"></span></span><span class="tr"></span></div>
        </div>
        <div class="bar layerbar">
          <button class="drop" aria-label="Layer menu"><span class="car"></span></button>
          <svg class="i"><use href="#glayers"/></svg><svg class="grip"><use href="#dots"/></svg>
          <button aria-label="Expand layers"><svg class="i"><use href="#expand"/></svg></button>
          <button aria-label="Collapse layers"><svg class="i"><use href="#collapse"/></svg></button>
          <span class="sep"></span>
          <button class="on" aria-label="Visible layers"><svg class="i teal"><use href="#layers"/></svg></button>
          <button class="on" aria-label="Hidden layers"><svg class="i"><use href="#layer1"/></svg></button>
          <button class="on" aria-label="Isolated layers"><svg class="i"><use href="#layer2"/></svg></button>
          <button class="on" aria-label="Inactive layers"><svg class="i"><use href="#layer3"/></svg></button>
          <button class="on" aria-label="Layer items"><svg class="i"><use href="#layers"/></svg></button>
          <button class="on" aria-label="Nested layers"><svg class="i"><use href="#layer4"/></svg></button>
          <span class="sep"></span>
          <button aria-label="Filter layers"><svg class="i"><use href="#funnelo"/></svg></button>
          <button aria-label="Unfilter layers"><svg class="i"><use href="#funnelx"/></svg></button>
          <button aria-label="Filter by selection"><svg class="i"><use href="#funnelp"/></svg></button>
          <button class="end" aria-label="Layer settings"><svg class="i teal"><use href="#layers"/></svg></button>
          <button aria-label="Save layers"><svg class="i"><use href="#report"/></svg></button>
        </div>
        <div class="pick">
          <button disabled aria-label="Select model"><svg class="i pale"><use href="#pointer"/></svg></button>
          <div class="sel"><select disabled aria-label="Active model"><option>PRT0002.PRT</option></select><span class="car pale"></span></div>
        </div>
        <ul class="layers">
          <li class="n root"><svg class="i teal"><use href="#layers"/></svg>Layers</li>
          <li class="n kid"><span class="tw"></span><svg class="i"><use href="#layeritem"/></svg>1_ALL_PLANES</li>
          <li class="n kid"><span class="tw"></span><svg class="i"><use href="#layeritem"/></svg>2_ALL_CSYS</li>
          <li class="n kid"><span class="el"></span><svg class="i"><use href="#layeritem"/></svg>3_ALL_AXES</li>
          <li class="n kid"><span class="tw"></span><svg class="i"><use href="#sheet"/></svg>7_ALL_FEATURES</li>
        </ul>
      </div>
      <div class="pright">
        <div class="bar">
          <button class="drop" aria-label="Detail menu"><span class="car pale"></span></button>
          <svg class="i"><use href="#detail"/></svg><svg class="grip"><use href="#dots"/></svg>
          <button aria-label="Expand all"><svg class="i"><use href="#expand"/></svg></button>
          <button aria-label="Collapse all"><svg class="i"><use href="#collapse"/></svg></button>
          <span class="sep"></span>
          <button aria-label="Tree list"><svg class="i"><use href="#treelist"/></svg></button>
          <button aria-label="Back"><svg class="i"><use href="#left"/></svg></button>
          <button aria-label="Forward"><svg class="i"><use href="#right"/></svg></button>
          <button class="end" aria-label="Save detail"><svg class="i"><use href="#report"/></svg></button>
        </div>
        <div class="n detail"><svg class="i"><use href="#cube"/></svg>PRT0002.PRT</div>
      </div>
    </div>
  </aside>

  <section class="view">
    <div class="viewbar">
      <button aria-label="Refit"><svg class="i"><use href="#zfit"/></svg></button><button aria-label="Zoom in"><svg class="i"><use href="#zin"/></svg></button><button aria-label="Zoom out"><svg class="i"><use href="#zout"/></svg></button><button aria-label="Repaint"><svg class="i"><use href="#repaint"/></svg></button><button aria-label="Rendering"><svg class="i"><use href="#render"/></svg></button><button aria-label="Display style"><svg class="i"><use href="#box"/></svg></button><button aria-label="Saved orientations"><svg class="i"><use href="#saved"/></svg></button><button aria-label="View manager"><svg class="i"><use href="#camera"/></svg></button><button aria-label="Perspective"><svg class="i"><use href="#persp"/></svg></button><button aria-label="Section"><svg class="i"><use href="#section"/></svg></button><button aria-label="Plane display"><svg class="i"><use href="#planeeye"/></svg></button><button aria-label="Axis display"><svg class="i"><use href="#axiseye"/></svg></button><button class="on" aria-label="Point display"><svg class="i"><use href="#pointeye"/></svg></button><button aria-label="Csys display"><svg class="i"><use href="#csyseye"/></svg></button><button aria-label="Annotation display"><svg class="i"><use href="#anno"/></svg></button><button aria-label="Spin center"><svg class="i"><use href="#drag"/></svg></button><button aria-label="Simulate"><svg class="i"><use href="#tri"/></svg></button><button aria-label="Pause"><svg class="i"><use href="#pause"/></svg></button><button aria-label="Panel"><svg class="i"><use href="#panel"/></svg></button>
    </div>
    <svg class="model" viewBox="710 285 280 250" role="img" aria-label="Swept hat model">
      <defs>
        <linearGradient id="brim" x1="0" y1="0" x2="0" y2="1"><stop offset="0" stop-color="#8593e2"/><stop offset=".45" stop-color="#99a6f5"/><stop offset="1" stop-color="#a7b2fb"/></linearGradient>
        <linearGradient id="rim" gradientUnits="userSpaceOnUse" x1="785" y1="390" x2="935" y2="390"><stop offset="0" stop-color="#93a9fa"/><stop offset=".35" stop-color="#8199ee"/><stop offset=".65" stop-color="#6670aa"/><stop offset="1" stop-color="#54597f"/></linearGradient>
        <linearGradient id="cone" gradientUnits="userSpaceOnUse" x1="785" y1="410" x2="932" y2="380"><stop offset="0" stop-color="#b59cc0"/><stop offset=".45" stop-color="#af94b0"/><stop offset=".75" stop-color="#937f9e"/><stop offset="1" stop-color="#69628b"/></linearGradient>
        <linearGradient id="base" x1="0" y1="0" x2="0" y2="1"><stop offset=".6" stop-color="#b898a8" stop-opacity="0"/><stop offset="1" stop-color="#b898b4" stop-opacity=".7"/></linearGradient>
        <radialGradient id="shine"><stop offset="0" stop-color="#ffe0b5"/><stop offset=".35" stop-color="#eac2a6" stop-opacity=".8"/><stop offset="1" stop-color="#c5a0ac" stop-opacity="0"/></radialGradient>
        <radialGradient id="glow"><stop offset="0" stop-color="#fffef4"/><stop offset=".4" stop-color="#e2e6ff" stop-opacity=".8"/><stop offset="1" stop-color="#aab4fc" stop-opacity="0"/></radialGradient>
        <radialGradient id="shade"><stop offset="0" stop-color="#535ba4" stop-opacity=".8"/><stop offset=".5" stop-color="#5f6bb8" stop-opacity=".4"/><stop offset="1" stop-color="#6f7ed0" stop-opacity="0"/></radialGradient>
        <pattern id="mesh" width="3" height="3" patternUnits="userSpaceOnUse"><path d="M0 .5h3M.5 0v3" stroke="#6a6f9c" stroke-opacity=".42"/></pattern>
        <clipPath id="brimclip"><path id="bp" d="M785 410C750 415 727 433 726.500 455C726 494 800 523 868 524C935 524 977 500 977 471C976 449 956 432 928 421L850 400Z"/></clipPath>
      </defs>
      <use href="#bp" fill="url(#brim)"/>
      <g clip-path="url(#brimclip)">
        <ellipse cx="934" cy="446" rx="20" ry="30" fill="url(#shade)"/>
        <ellipse cx="826" cy="480" rx="32" ry="11" transform="rotate(12 826 480)" fill="url(#glow)"/>
      </g>
      <path d="M785 410C750 415 727 433 726.500 455C726 494 800 523 868 524C935 524 977 500 977 471C976 449 956 432 928 421" fill="none" stroke="#4c706f" stroke-width="1.200"/>
      <path d="M785 410C795 390 812 342 826 320C839 301 852 297 864 297C880 297 890 309 897 325C906 346 919 396 928 421L936 440C938 458 912 482 868 482C825 480 777 464 771 437C772 425 780 417 785 410Z" fill="url(#rim)"/>
      <path id="conep" d="M775 448C785 432 797 397 810 368C823 336 838 301 867 298C881 299 889 308 896 325C906 350 918 399 928 423L936 440C936 465 905 482 868 482C830 480 786 465 775 448Z" fill="url(#cone)"/>
      <path d="M775 448C785 432 797 397 810 368C823 336 838 301 867 298C881 299 889 308 896 325C906 350 918 399 928 423L936 440C936 465 905 482 868 482C830 480 786 465 775 448Z" fill="url(#base)"/>
      <path d="M775 448C785 432 797 397 810 368C823 336 838 301 867 298C881 299 889 308 896 325C906 350 918 399 928 423L936 440C936 465 905 482 868 482C830 480 786 465 775 448Z" fill="url(#mesh)"/>
      <ellipse cx="855" cy="323" rx="8" ry="19" transform="rotate(10 855 323)" fill="url(#shine)"/>
      <path d="M775 448C786 465 830 480 868 482C908 482 939 463 936 440L928 422" fill="none" stroke="#c86f58" stroke-width="1.300"/>
      <path d="M776 449C770 439 770 432 777 420" fill="none" stroke="#2d72a2" stroke-width="1.400" stroke-dasharray="5 1"/>
      <path d="m850 439 6 7M856 439l-6 7" stroke="#de3428" stroke-width="2.200"/>
      <text x="859" y="446" class="pnt">PNT0</text>
      <path d="M881.500 370v12l3-3 2 5 2.500-1-2-4.500h4z" fill="#fff" stroke="#4d4867" stroke-width=".8"/>
    </svg>
  </section>
</main>

<footer class="status">
  <div class="sicons">
    <button class="on" aria-label="Navigator"><svg class="i"><use href="#navicon"/></svg></button>
    <button aria-label="Browser"><svg class="i"><use href="#web"/></svg></button>
    <button aria-label="Full screen"><svg class="i"><use href="#screen"/></svg></button>
  </div>
  <ul class="msgs"><li class="more">Select any number of chains as trajectories for the sweep.</li><li>Showing feature 7 (SWEEP_1) in part PRT0002.</li></ul>
  <div class="tools">
    <button aria-label="Regenerate status"><svg class="i"><use href="#regenlight"/></svg></button>
    <div class="search"><button aria-label="Find"><svg class="i"><use href="#bino"/></svg></button><button class="drop" aria-label="Find options"><span class="car"></span></button></div>
    <div class="sel geo"><select aria-label="Selection filter"><option>Geometry</option></select><span class="car"></span></div>
  </div>
  <div class="recorder">
    <svg class="pin"><use href="#pin"/></svg>
    <button aria-label="Snapshot"><svg class="ir"><use href="#shot"/></svg></button>
    <button aria-label="Record"><span class="rec"></span></button>
    <span class="time">02:34</span>
    <button aria-label="Microphone"><svg class="ir"><use href="#mic"/></svg></button>
    <button aria-label="Sound"><svg class="ir"><use href="#sound"/></svg></button>
    <button aria-label="Webcam"><svg class="ir"><use href="#webcam"/></svg></button>
    <span class="rsep"></span>
    <button aria-label="Window"><span class="stack"></span></button>
    <button aria-label="Settings"><svg class="ir"><use href="#gear"/></svg></button>
  </div>
</footer>
</body>
</html>
```
FILE: styles.css
```css
* { box-sizing: border-box; }
body {
  margin: 0; height: 100vh; padding: 16px 0; background: #000; overflow: hidden;
  display: flex; flex-direction: column;
  font: 8px/10px Roboto, "Open Sans", sans-serif; color: #4a5054;
}
button { font: inherit; color: inherit; background: none; border: 0; padding: 0; margin: 0; display: flex; align-items: center; justify-content: center; }
input, select { font: inherit; color: inherit; min-width: 0; }
ul { list-style: none; margin: 0; padding: 0; }
.sprite { position: absolute; width: 0; height: 0; }
.i { width: 12px; height: 12px; flex: none; color: #8b9295; }
.i.s { width: 9px; height: 9px; }
.ib { width: 24px; height: 24px; flex: none; }
.ix { width: 7px; height: 7px; }
.ir { width: 13px; height: 13px; }
.i.teal { color: #5ba5ba; }
.i.dark { color: #4c5255; }
.i.pale { color: #b8bdbf; }
.flip { transform: scaleX(-1); }
.car { width: 0; height: 0; flex: none; border: 2px solid transparent; border-top: 3px solid currentColor; border-bottom: 0; }
.car.pale { color: #a7acaf; }

.titlebar { flex: none; height: 16px; display: flex; align-items: center; background: #dbe1e1; padding-bottom: 3px; }
.brand { flex: 1; display: flex; align-items: center; gap: 3px; padding-left: 3px; font: 11px/13px "Open Sans", sans-serif; color: #4f5658; }
.brand .i { width: 10px; height: 10px; }
h1 { margin: 0; font: 8px/12px "Open Sans", sans-serif; }
.winbtns { flex: 1; display: flex; justify-content: flex-end; gap: 9px; padding-right: 3px; }
.min { width: 7px; height: 2px; background: #6d7476; margin-top: 5px; }

.tabs { flex: none; height: 18px; display: flex; background: #3f4749; color: #e3e7e7; font-size: 9px; }
.tabs > button { padding: 0 15px; }
.tabs > .file { width: 37px; padding: 0 3px 0 0; background: #50b748; }
.tabs > .active { background: #f7f9fb; color: #5c9440; }
.tabtools { margin-left: auto; display: flex; gap: 7px; padding-right: 1px; align-items: center; font-weight: 700; }
.up { border: 3px solid transparent; border-bottom: 4px solid #e3e7e7; border-top: 0; }

.ribbon { flex: none; height: 72px; display: flex; background: #f7f9fb; border-bottom: 1px solid #d3d7d9; }
.group { flex: none; display: flex; flex-direction: column; justify-content: space-between; border-right: 1px solid #d3d7da; margin-top: 1px; }
.cmds { display: grid; align-items: start; }
.col { display: grid; grid-auto-rows: 18px; justify-items: start; min-width: 0; }
.cmd { gap: 2px; white-space: nowrap; text-align: left; height: 16px; }
.cmd .car { margin-left: 4px; }
.off { color: #b7babd; }
.big { flex-direction: column; padding-top: 3px; justify-self: center; line-height: 10px; }
.big .ib { margin-bottom: 4px; }
.big .car { margin-top: 3px; }
.glabel { height: 15px; gap: 3px; align-self: center; white-space: nowrap; }
.g-ops { width: 97px; } .g-ops .cmds { grid-template-columns: 44px 1fr; column-gap: 3px; }
.g-data { width: 98px; padding-left: 4px; }
.g-body { width: 94px; padding-left: 4px; }
.g-datum { width: 146px; } .g-datum .cmds { grid-template-columns: 28px 80px 1fr; column-gap: 2px; }
.g-shapes { width: 99px; } .g-shapes .cmds { grid-template-columns: 35px 1fr; column-gap: 1px; }
.g-eng { width: 110px; padding-left: 4px; } .g-eng .cmds { grid-template-columns: 59px 1fr; }
.g-edit { width: 240px; } .g-edit .cmds { grid-template-columns: 33px 42px 48px 46px 1fr; }
.g-surf { width: 95px; } .g-surf .cmds { grid-template-columns: 44px 1fr; }
.g-intent { width: 59px; }

.bar { display: flex; align-items: center; }
.bar > button { width: 16px; height: 16px; flex: none; border: 1px solid transparent; }
.bar > .drop { width: 10px; }
.bar .on, .sicons .on, .viewbar .on { background: #dde1e2; border: 1px solid #b9bfc1; }
.sep { width: 6px; height: 16px; flex: none; background: linear-gradient(#d2d6d8, #d2d6d8) center / 1px 100% no-repeat; }
.quick { flex: none; height: 16px; background: #f7f9fb; border-bottom: 1px solid #d9dddf; }
.quick > .first { width: 13px; }
.quick .glyph { font-size: 9px; font-weight: 700; white-space: nowrap; }

main { flex: 1; min-height: 0; display: flex; background: #e9eaee; }
.side { width: 461px; flex: none; display: flex; flex-direction: column; }
.strip { height: 17px; flex: none; background: #d9dfe0; display: flex; }
.strip .on { width: 19px; background: #f7f9fb; }
.panels { flex: 1; min-height: 0; display: flex; background: #f7f9fb; border-right: 1px solid #dfe2e5; padding-bottom: 4px; }
.pleft { width: 300px; flex: none; border-right: 2px solid #d9dddf; display: flex; flex-direction: column; }
.pright { flex: 1; }
.panels .bar { height: 22px; padding: 0 1px 0 3px; flex: none; }
.panels .bar > .drop { width: 12px; }
.panels .pright .bar { padding-right: 4px; }
.grip { width: 8px; height: 12px; margin-right: 4px; flex: none; }
.bar > .end { margin-left: auto; }
.find { height: 18px; flex: none; display: flex; align-items: center; padding: 0 3px 0 5px; }
.find .box { flex: 1; height: 18px; margin-left: 2px; display: flex; background: #fff; border: 1px solid #c4c9cb; padding-right: 2px; }
.find input { flex: 1; border: 0; background: none; padding: 0 3px; outline: 0; }
.find .drop { width: 14px; }
.plus { width: 12px; height: 8px; background: linear-gradient(#696f72, #696f72) center / 8px 1px no-repeat, linear-gradient(#696f72, #696f72) center / 1px 8px no-repeat; }
.treetable { width: 100%; table-layout: fixed; border-collapse: collapse; flex: none; height: 138px; }
.treetable th { height: 16px; padding: 4px 0 0; font-weight: 400; text-align: left; border-bottom: 1px solid #dadee0; }
.treetable th + th { border-left: 1px solid #dadee0; padding-left: 3px; }
.treetable th:nth-child(1) { width: 195px; }
.treetable th:nth-child(2) { width: 64px; }
.treetable td { padding: 0; text-align: center; }
.treetable td:nth-child(2) { border-left: 1px solid #eceff1; padding-right: 30px; }
.treetable td:nth-child(3) { text-align: right; padding-right: 21px; }
.n { display: flex; align-items: center; white-space: nowrap; height: 12px; }
.root { padding-left: 4px; gap: 3px; }
.kid { padding-left: 10px; gap: 3px; }
.kid .i, .root .i { height: 11px; width: 11px; }
.kid > span { width: 5px; height: 14px; position: relative; border-left: 1px dotted #b9bec0; }
.el::after { content: ""; position: absolute; left: 0; top: 7px; width: 5px; border-top: 1px solid #c5cacc; }
.tw::after { content: ""; position: absolute; left: -2px; top: 5px; border: 2px solid transparent; border-left: 3px solid #454a4c; border-right: 0; }
.insert { height: 2px; flex: none; margin: 4px 0 0 4px; background: #8bcd79; }
.scrolls { margin-top: auto; flex: none; display: flex; gap: 1px; padding-left: 3px; border-bottom: 2px solid #d9dddf; }
.scroll { display: flex; align-items: center; height: 11px; width: 102px; border: 1px solid #e0e3e5; background: #f5f7f8; }
.scroll.dim { flex: 1; }
.track { flex: 1; height: 9px; background: #dde1e3; }
.dim .track { background: #fafbfc; border: 1px solid #e9ebed; }
.thumb { display: block; width: 66px; height: 9px; background: #fbfcfc; border: 1px solid #cdd1d3; }
.tl, .tr { margin: 0 3px; border: 2px solid transparent; }
.tl { border-right: 3px solid #686e70; border-left: 0; }
.tr { border-left: 3px solid #686e70; border-right: 0; }
.dim .tl { border-right-color: #b0b5b8; }
.dim .tr { border-left-color: #b0b5b8; }
.panels .layerbar .grip { margin-right: 6px; }
.pick { height: 16px; flex: none; display: flex; padding: 0 1px 0 3px; }
.pick button { width: 16px; border: 1px solid #d2d6d8; background: #e9ecee; }
.sel { flex: 1; display: flex; align-items: center; border: 1px solid #d2d6d8; position: relative; }
.sel select { flex: 1; align-self: stretch; appearance: none; border: 0; background: none; padding: 0 4px; color: #a8adb0; opacity: 1; }
.sel .car { position: absolute; right: 3px; top: 5px; }
.sel::after { content: ""; position: absolute; right: 9px; top: 0; bottom: 0; border-left: 1px solid #d2d6d8; }
.layers { flex: none; height: 198px; display: grid; grid-template-rows: 13px 14px 13px 14px 13px; align-items: center; align-content: start; }
.layers .kid { gap: 4px; }
.layers .kid .i { width: 12px; height: 12px; }
.detail { height: 14px; padding-left: 2px; gap: 3px; }
.detail .i { width: 11px; height: 11px; }

.view { flex: 1; min-width: 0; position: relative; display: flex; justify-content: center; align-items: flex-start; padding: 5px 0 0 3px; }
.viewbar { width: 334px; height: 21px; display: flex; align-items: center; background: #fafbfc; border: 1px solid #c3c7ca; }
.viewbar button { flex: 1; height: 17px; border: 1px solid transparent; }
.model { position: absolute; left: 249px; top: 147px; width: 280px; height: 250px; }
.pnt { font: 10px Roboto, sans-serif; fill: #96505c; }

.status { flex: none; height: 42px; position: relative; display: flex; align-items: flex-end; background: #f8faf9; border-top: 1px solid #d5d9da; }
.sicons { display: flex; gap: 2px; padding: 0 5px 3px 1px; }
.sicons button { width: 16px; height: 16px; }
.msgs { border-left: 1px solid #d8dcdd; padding: 0 0 4px 3px; }
.msgs li { padding-left: 6px; position: relative; }
.msgs li::before { content: ""; position: absolute; left: 1px; top: 4px; width: 3px; height: 3px; border-radius: 2px; background: #246b8d; }
.msgs .more::before { left: 0; width: 6px; height: 4px; }
.tools { margin-left: auto; display: flex; padding: 0 8px 3px 0; height: 19px; }
.tools > button { width: 16px; border-left: 1px solid #d8dcdd; }
.search { display: flex; border: 1px solid #d3d7d9; border-right-width: 2px; }
.search button { width: 18px; }
.search .drop { width: 11px; border-left: 1px solid #d3d7d9; }
.geo { flex: none; width: 111px; margin-left: 61px; border-color: #c3c8ca; }
.geo select { color: #5c6265; }
.recorder { position: absolute; left: 10px; top: 3px; height: 18px; width: 158px; display: flex; align-items: center; justify-content: space-between; padding: 0 4px 0 2px; background: #1a1a1a; border-radius: 2px; color: #bbb; }
.pin { width: 7px; height: 13px; flex: none; }
.rec { width: 11px; height: 11px; border-radius: 50%; background: #e12f37; border: 1px solid #8a2a2e; }
.time { font-size: 6px; }
.rsep { width: 1px; height: 16px; background: #666; }
.stack { width: 11px; height: 9px; background: #fff; box-shadow: 2px 2px #999; }
```
